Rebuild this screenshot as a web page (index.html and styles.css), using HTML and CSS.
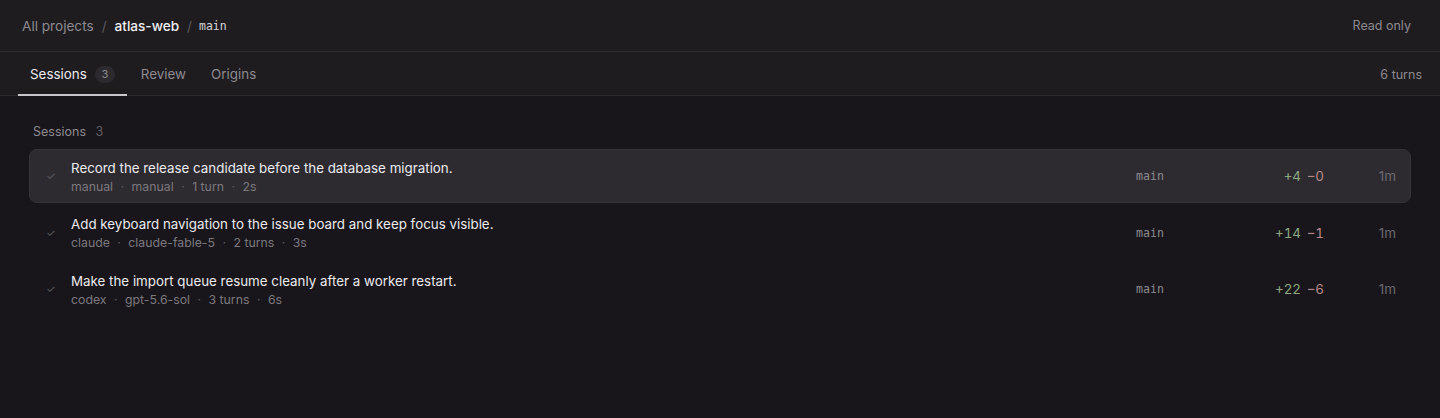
FILE: index.html
```html
<!DOCTYPE html>
<html lang="en">
<head>
<meta charset="utf-8">
<title>atlas-web · main</title>
<link rel="stylesheet" href="styles.css">
</head>
<body>
<div class="app">
  <header class="topbar">
    <nav class="crumbs">
      <span class="crumb-link">All projects</span>
      <span class="sep">/</span>
      <span class="crumb-project">atlas-web</span>
      <span class="sep">/</span>
      <span class="crumb-branch">main</span>
    </nav>
    <span class="readonly">Read only</span>
  </header>
  <div class="tabbar">
    <div class="tabs">
      <div class="tab active">Sessions <span class="badge">3</span></div>
      <div class="tab">Review</div>
      <div class="tab">Origins</div>
    </div>
    <span class="turns">6 turns</span>
  </div>
  <main class="content">
    <div class="section-label">Sessions <span class="count">3</span></div>
    <div class="rows">
      <div class="row selected">
        <span class="check">✓</span>
        <div class="info">
          <div class="title">Record the release candidate before the database migration.</div>
          <div class="meta">manual <span class="dot">·</span> manual <span class="dot">·</span> 1 turn <span class="dot">·</span> 2s</div>
        </div>
        <span class="branch">main</span>
        <span class="diff"><span class="add">+4</span> <span class="del">−0</span></span>
        <span class="time">1m</span>
      </div>
      <div class="row">
        <span class="check">✓</span>
        <div class="info">
          <div class="title">Add keyboard navigation to the issue board and keep focus visible.</div>
          <div class="meta">claude <span class="dot">·</span> claude-fable-5 <span class="dot">·</span> 2 turns <span class="dot">·</span> 3s</div>
        </div>
        <span class="branch">main</span>
        <span class="diff"><span class="add">+14</span> <span class="del">−1</span></span>
        <span class="time">1m</span>
      </div>
      <div class="row">
        <span class="check">✓</span>
        <div class="info">
          <div class="title">Make the import queue resume cleanly after a worker restart.</div>
          <div class="meta">codex <span class="dot">·</span> gpt-5.6-sol <span class="dot">·</span> 3 turns <span class="dot">·</span> 6s</div>
        </div>
        <span class="branch">main</span>
        <span class="diff"><span class="add">+22</span> <span class="del">−6</span></span>
        <span class="time">1m</span>
      </div>
    </div>
  </main>
</div>
</body>
</html>
```

FILE: styles.css
```css
* { box-sizing: border-box; }
html, body { margin: 0; height: 100%; }
body {
  background: #18161a;
  font-family: Inter, "Noto Sans", sans-serif;
  color: #e6e4e8;
}
.app { min-height: 100%; }

.topbar {
  height: 52px;
  background: #1e1c1f;
  border-bottom: 1px solid #2c2a2e;
  display: flex;
  align-items: center;
  justify-content: space-between;
  padding: 0 29px 0 22px;
}
.crumbs { display: flex; align-items: center; gap: 8px; font-size: 13.6px; }
.crumb-link { color: #8d8a90; }
.sep { color: #5c5a5f; }
.crumb-project { color: #f0eef2; font-weight: 500; }
.crumb-branch { font-family: "DejaVu Sans Mono", monospace; font-size: 11.5px; color: #d6d4d8; margin-left: -1px; }
.readonly { font-size: 12.5px; color: #8d8a90; }

.tabbar {
  height: 44px;
  background: #1e1c1f;
  border-bottom: 1px solid #2c2a2e;
  display: flex;
  align-items: stretch;
  justify-content: space-between;
  padding: 0 18px 0 18px;
}
.tabs { display: flex; align-items: stretch; }
.tab {
  display: flex;
  align-items: center;
  gap: 8px;
  padding: 2px 14px 0 12px;
  font-size: 13.4px;
  color: #8d8a90;
  border-bottom: 2px solid transparent;
  margin-bottom: -1px;
}
.tab.active { color: #ecebee; border-bottom-color: #c9c7cb; padding-right: 12px; }
.tab:nth-child(2) { padding-left: 14px; padding-right: 13px; }
.badge {
  display: inline-flex;
  align-items: center;
  justify-content: center;
  min-width: 20px;
  height: 17px;
  padding: 0 6px;
  border-radius: 9px;
  background: #2c2a2e;
  color: #8d8a90;
  font-size: 11px;
}
.turns { align-self: center; font-size: 12.5px; color: #8d8a90; padding-top: 2px; }

.content { padding: 27px 29px 0 29px; }
.section-label {
  font-size: 12.5px;
  color: #8d8a90;
  padding-left: 4px;
  height: 18px;
  line-height: 18px;
  margin-bottom: 8px;
}
.section-label .count { color: #5f5d62; margin-left: 6px; }

.rows { display: flex; flex-direction: column; gap: 2.5px; }
.row {
  height: 54px;
  display: grid;
  grid-template-columns: 25px 1fr 89px 100px 72px;
  align-items: center;
  padding: 0 14px 0 16px;
  border: 1px solid transparent;
  border-radius: 8px;
}
.row.selected { background: #2d2b30; border-color: #363439; }
.check { color: #5d5b60; font-size: 11px; padding-left: 0; }
.info { display: flex; flex-direction: column; gap: 1px; min-width: 0; padding-top: 1px; }
.title { font-size: 13.35px; color: #eceaee; line-height: 18px; white-space: nowrap; }
.meta { font-size: 12.3px; color: #7c797f; line-height: 17px; }
.meta .dot { color: #5a585d; margin: 0 4px; }
.branch { font-family: "DejaVu Sans Mono", monospace; font-size: 11.6px; color: #8d8a90; padding-left: 1px; }
.diff { text-align: right; font-size: 13.4px; font-variant-numeric: tabular-nums; word-spacing: 2px; }
.add { color: #8fa882; }
.del { color: #b98a8c; }
.time { text-align: right; font-size: 13.5px; color: #6a686d; }
```
